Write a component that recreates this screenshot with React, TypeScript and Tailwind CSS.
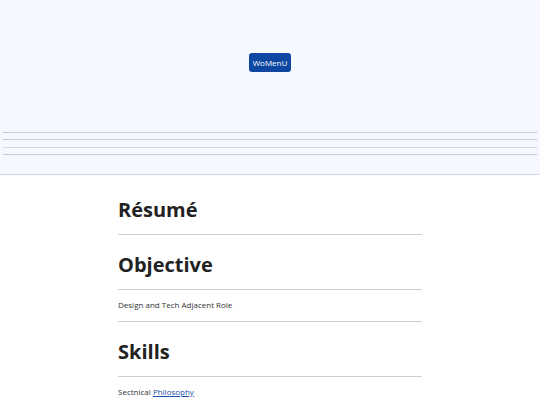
import React from "react";

const font = { fontFamily: '"Open Sans", "Noto Sans", sans-serif' };

function Rule() {
  return <div className="h-px w-full bg-[#cfcfd3]" />;
}

export default function App() {
  return (
    <div className="w-[540px] min-h-[405px] bg-white text-[#222]" style={font}>
      <header className="h-[175px] bg-[#f5f8ff] border-b border-[#d3d6e0] flex flex-col">
        <div className="flex justify-center pt-[53px]">
          <button className="h-[19px] w-[42px] rounded-[3px] bg-[#0d47a1] text-white text-[8px] leading-none">
            WoMenU
          </button>
        </div>
        <div className="mt-[60px] px-[3px] flex flex-col gap-[6.3px]">
          <div className="h-px bg-[#c9ccd8]" />
          <div className="h-px bg-[#c9ccd8]" />
          <div className="h-px bg-[#d3d6e0]" />
          <div className="h-px bg-[#c9ccd8]" />
        </div>
      </header>

      <main className="w-[304px] mx-auto pt-[21px]">
        <h2 className="text-[20px] leading-[28px] font-bold">Résumé</h2>
        <div className="mt-[10px]">
          <Rule />
        </div>
        <h2 className="mt-[16px] text-[20px] leading-[28px] font-bold">Objective</h2>
        <div className="mt-[10px]">
          <Rule />
        </div>
        <p className="mt-[9px] text-[8px] leading-[12px] text-[#333]">Design and Tech Adjacent Role</p>
        <div className="mt-[10px]">
          <Rule />
        </div>
        <h2 className="mt-[16px] text-[20px] leading-[28px] font-bold">Skills</h2>
        <div className="mt-[10px]">
          <Rule />
        </div>
        <p className="mt-[9px] text-[8px] leading-[12px] text-[#333]">
          Sectnical{" "}
          <a href="#" className="text-[#1a4ea8] underline">
            Philosophy
          </a>
        </p>
      </main>
    </div>
  );
}
